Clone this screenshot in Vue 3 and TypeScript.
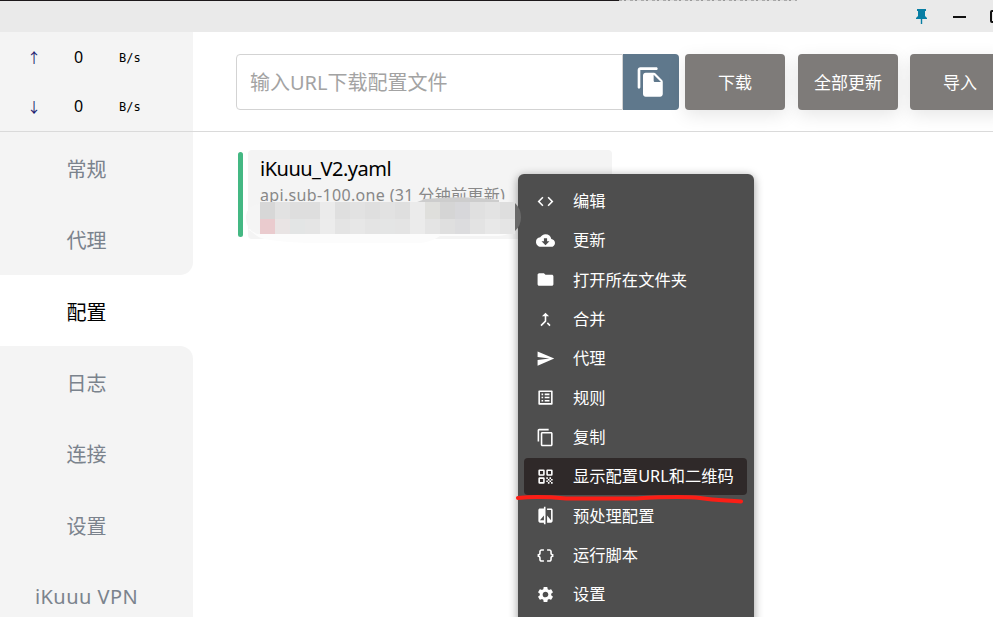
<script setup lang="ts">
interface MenuEntry {
  label: string
  icon: string
  hot?: boolean
}

const tabs: string[] = ['常规', '代理', '配置', '日志', '连接', '设置', 'iKuuu VPN']
const activeTab = '配置'
const activeIndex = tabs.indexOf(activeTab)

const rates = [
  { arrow: '↑', value: 0 },
  { arrow: '↓', value: 0 },
]

const entries: MenuEntry[] = [
  { label: '编辑', icon: 'M9.4 16.6 4.8 12l4.6-4.6L8 6l-6 6 6 6zm5.2 0 4.6-4.6-4.6-4.6L16 6l6 6-6 6z' },
  { label: '更新', icon: 'M19.35 10.04A7.49 7.49 0 0 0 12 4C9.11 4 6.6 5.64 5.35 8.04A5.994 5.994 0 0 0 0 14c0 3.31 2.69 6 6 6h13c2.76 0 5-2.24 5-5 0-2.64-2.05-4.78-4.65-4.96M17 13l-5 5-5-5h3V9h4v4z' },
  { label: '打开所在文件夹', icon: 'M10 4H4c-1.1 0-1.99.9-1.99 2L2 18c0 1.1.9 2 2 2h16c1.1 0 2-.9 2-2V8c0-1.1-.9-2-2-2h-8z' },
  { label: '合并', icon: 'M17 20.41 18.41 19 15 15.59 13.59 17zM7.5 8H11v5.59L5.59 19 7 20.41l6-6V8h3.5L12 3.5z' },
  { label: '代理', icon: 'M2.01 21 23 12 2.01 3 2 10l15 2-15 2z' },
  { label: '规则', icon: 'M19 5v14H5V5zm1.1-2H3.9c-.5 0-.9.4-.9.9v16.2c0 .4.4.9.9.9h16.2c.4 0 .9-.5.9-.9V3.9c0-.5-.5-.9-.9-.9M11 7h6v2h-6zm0 4h6v2h-6zm0 4h6v2h-6zM7 7h2v2H7zm0 4h2v2H7zm0 4h2v2H7z' },
  { label: '复制', icon: 'M16 1H4c-1.1 0-2 .9-2 2v14h2V3h12zm3 4H8c-1.1 0-2 .9-2 2v14c0 1.1.9 2 2 2h11c1.1 0 2-.9 2-2V7c0-1.1-.9-2-2-2m0 16H8V7h11z' },
  { label: '显示配置URL和二维码', hot: true, icon: 'M3 9.500Q3 11 4.500 11H9.500Q11 11 11 9.500V4.500Q11 3 9.500 3H4.500Q3 3 3 4.500zm2-4.500h4v4H5zM3 19.500Q3 21 4.500 21H9.500Q11 21 11 19.500V14.500Q11 13 9.500 13H4.500Q3 13 3 14.500zm2-4.500h4v4H5zM13 4.500V9.500Q13 11 14.500 11H19.500Q21 11 21 9.500V4.500Q21 3 19.500 3H14.500Q13 3 13 4.500zm6 4.500h-4V5h4zM19 19h2v2h-2zM13 13h2v2h-2zM15 15h2v2h-2zM13 17h2v2h-2zM15 19h2v2h-2zM17 17h2v2h-2zM17 13h2v2h-2zM19 15h2v2h-2z' },
  { label: '预处理配置', icon: 'M10 3H5c-1.1 0-2 .9-2 2v14c0 1.1.9 2 2 2h5v2h2V1h-2zm0 15H5l5-6zm9-15h-5v2h5v13l-5-6v9h5c1.1 0 2-.9 2-2V5c0-1.1-.9-2-2-2' },
  { label: '运行脚本', icon: 'M4 7v2c0 .55-.45 1-1 1H2v4h1c.55 0 1 .45 1 1v2c0 1.65 1.35 3 3 3h3v-2H7c-.55 0-1-.45-1-1v-2c0-1.3-.84-2.42-2-2.83v-.34C5.16 11.42 6 10.3 6 9V7c0-.55.45-1 1-1h3V4H7C5.35 4 4 5.35 4 7m17 3c-.55 0-1-.45-1-1V7c0-1.65-1.35-3-3-3h-3v2h3c.55 0 1 .45 1 1v2c0 1.3.84 2.42 2 2.83v.34c-1.16.41-2 1.52-2 2.83v2c0 .55-.45 1-1 1h-3v2h3c1.65 0 3-1.35 3-3v-2c0-.55.45-1 1-1h1v-4z' },
  { label: '设置', icon: 'M19.14 12.94c.04-.3.06-.61.06-.94s-.02-.64-.07-.94l2.03-1.58a.49.49 0 0 0 .12-.61l-1.92-3.32a.49.49 0 0 0-.59-.22l-2.39.96a7 7 0 0 0-1.62-.94l-.36-2.54a.48.48 0 0 0-.48-.41h-3.84c-.24 0-.43.17-.47.41l-.36 2.54c-.59.24-1.13.57-1.62.94l-2.39-.96a.48.48 0 0 0-.59.22L2.74 8.87c-.12.21-.08.47.12.61l2.03 1.58c-.05.3-.09.63-.09.94s.02.64.07.94l-2.03 1.58a.49.49 0 0 0-.12.61l1.92 3.32c.12.22.37.29.59.22l2.39-.96c.5.38 1.03.7 1.62.94l.36 2.54c.05.24.24.41.48.41h3.84c.24 0 .44-.17.47-.41l.36-2.54c.59-.24 1.13-.56 1.62-.94l2.39.96c.22.08.47 0 .59-.22l1.92-3.32a.48.48 0 0 0-.12-.61zM12 15.6A3.61 3.61 0 0 1 8.4 12c0-1.98 1.62-3.6 3.6-3.6s3.6 1.62 3.6 3.6-1.62 3.6-3.6 3.6' },
]

const mosaic: string[][] = [
  ['#d7d7d7', '#e2e2e2', '#dedede', '#dedede', '#ebebeb', '#dfdfdf', '#e2e2e2', '#dfdfdf', '#e2e2e2', '#dfdfdf', '#ebebeb', '#dfdfdc', '#d5d5d5', '#d7d7da', '#e0e0e0', '#e3e3e3', '#dedede'],
  ['#eacbce', '#e9e4e4', '#e3e5e5', '#e5e5e5', '#ececec', '#e4e4e4', '#e7e7e7', '#e4e4e4', '#e4e5e5', '#e4e4e4', '#ebebeb', '#e4e4e4', '#dfdfdf', '#dcdcde', '#e3e3e3', '#e8e8e8', '#e5e5e5'],
]
</script>

<template>
  <div class="window">
    <header class="titlebar">
      <div class="edge"><i class="edge-dark"></i><i class="edge-marks"></i></div>
      <div class="controls">
        <svg class="pin" viewBox="0 0 11 15"><path d="M1 0h9v2H9v5l2 2v1H6.2v5H4.8v-5H0V9l2-2V2H1z" /></svg>
        <i class="minimize"></i>
        <i class="maximize"></i>
      </div>
    </header>

    <div class="body">
      <aside class="sidebar">
        <div class="traffic">
          <div v-for="r in rates" :key="r.arrow" class="rate">
            <span class="arrow">{{ r.arrow }}</span>
            <span class="value">{{ r.value }}</span>
            <span class="unit">B/s</span>
          </div>
        </div>
        <nav class="tabs">
          <div
            v-for="(t, i) in tabs"
            :key="t"
            class="tab"
            :class="{ active: i === activeIndex, before: i === activeIndex - 1, after: i === activeIndex + 1 }"
          >{{ t }}</div>
        </nav>
      </aside>

      <main class="main">
        <div class="toolbar">
          <div class="url-field">输入URL下载配置文件</div>
          <div class="paste">
            <svg viewBox="0 0 24 24"><path d="M16 1H4c-1.1 0-2 .9-2 2v13c0 .55.45 1 1 1s1-.45 1-1V3h12c.55 0 1-.45 1-1s-.45-1-1-1m-.59 4.59 4.83 4.83c.37.37.58.88.58 1.41V21c0 1.1-.9 2-2 2H7.99C6.89 23 6 22.1 6 21l.01-14c0-1.1.89-2 1.99-2h6.17c.53 0 1.04.21 1.24.59M15 12h4.5L14 6.5V11c0 .55.45 1 1 1" /></svg>
          </div>
          <button class="btn">下载</button>
          <button class="btn">全部更新</button>
          <button class="btn last">导入</button>
        </div>

        <div class="profile">
          <i class="marker"></i>
          <div class="card">
            <div class="name">iKuuu_V2.yaml</div>
            <div class="source">api.sub-100.one (31 分钟前更新)</div>
          </div>
          <svg class="smudge" viewBox="0 0 280 50">
            <path class="fade" d="M3 34H270Q266 40 254 41H195Q186 47 175 48H70Q20 47 12 41Z" />
            <path class="haze" d="M18 8H163Q171 4 190 4H257Q270 6 270 22Q270 36 258 39H12Q0 34 1 21Q2 10 18 8Z" />
            <path class="shade" d="M270 8Q276 14 276 22Q276 31 270 36Z" />
            <path class="shade-top" d="M180 4Q220 0 254 5V9H167Z" />
            <g v-for="(row, y) in mosaic" :key="y">
              <rect v-for="(c, x) in row" :key="x" :x="15 + x * 15" :y="7 + y * 15 + (y ? 2 : 0)" width="15" :height="y ? 15 : 17" :fill="c" />
            </g>
          </svg>
        </div>
      </main>
    </div>

    <div class="menu">
      <div v-for="e in entries" :key="e.label" class="entry" :class="{ hot: e.hot }">
        <svg viewBox="0 0 24 24"><path :d="e.icon" /></svg>
        <span>{{ e.label }}</span>
      </div>
      <svg class="underline" viewBox="0 0 228 12"><path d="M2 4C20 2 34 3 50 4.5H120C145 3 165 2 184 4C202 7 211 6 225 7.500" /></svg>
    </div>
  </div>
</template>

<style>
body {
  overflow: hidden;
}
</style>

<style scoped>
.window {
  position: relative;
  width: 993px;
  height: 617px;
  overflow: hidden;
  display: flex;
  flex-direction: column;
  background: #fff;
  color: #000;
  font-family: "Noto Sans", "Noto Sans CJK SC", sans-serif;
}
.titlebar {
  height: 32px;
  flex: none;
  background: #eaeaea;
}
.edge {
  display: flex;
  height: 1px;
}
.edge-dark {
  width: 619px;
  background: #1d191b;
}
.edge-marks {
  width: 178px;
  background: repeating-linear-gradient(90deg, #aaa 0 3px, #ddd 3px 5px, #999 5px 7px, #ddd 7px 11px);
}
.controls {
  height: 31px;
  padding-left: 916px;
  display: flex;
  align-items: center;
}
.pin {
  width: 11px;
  height: 15px;
  flex: none;
  fill: #087ea4;
}
.minimize {
  flex: none;
  width: 13px;
  height: 2px;
  margin: 0 25px 0 26px;
  background: #111;
}
.maximize {
  flex: none;
  box-sizing: border-box;
  width: 13px;
  height: 13px;
  margin-left: -1px;
  border: 2px solid #111;
  border-radius: 2px;
}
.body {
  flex: 1;
  display: flex;
}
.sidebar {
  width: 193px;
  flex: none;
}
.traffic {
  box-sizing: border-box;
  height: 100px;
  background: #f4f4f4;
  border-bottom: 1px solid #dadada;
}
.rate {
  height: 49px;
  display: grid;
  grid-template-columns: 68px 21px 1fr;
  align-items: center;
}
.arrow {
  font: 14px/20px "Noto Sans CJK SC", sans-serif;
  width: 14px;
  margin-left: 27px;
  color: #1c1c70;
}
.value {
  font-size: 16px;
  text-align: center;
}
.unit {
  margin-left: 30px;
  padding-top: 3px;
  font: 12px "DejaVu Sans Mono", monospace;
}
.tab {
  box-sizing: border-box;
  height: 71.3px;
  padding: 2px 20px 0 0;
  display: flex;
  align-items: center;
  justify-content: center;
  background: #f4f4f4;
  color: #7b838d;
  font-size: 20px;
}
.tab:last-child {
  letter-spacing: 0.45px;
}
.tab.active {
  background: #fff;
  color: #000;
}
.tab.before {
  border-bottom-right-radius: 13px;
}
.tab.after {
  border-top-right-radius: 13px;
}
.main {
  flex: 1;
  min-width: 0;
}
.toolbar {
  box-sizing: border-box;
  height: 100px;
  padding: 22px 0 0 43px;
  display: flex;
  border-bottom: 1px solid #dadada;
}
.url-field {
  box-sizing: border-box;
  width: 387px;
  height: 56px;
  flex: none;
  padding-left: 13px;
  border: 1px solid #d3d3d3;
  border-radius: 4px 0 0 4px;
  color: #a3a3a3;
  font-size: 20px;
  line-height: 55px;
}
.paste {
  width: 56px;
  height: 56px;
  flex: none;
  display: flex;
  align-items: center;
  justify-content: center;
  background: #5f788c;
  border-radius: 0 4px 4px 0;
}
.paste svg {
  width: 32px;
  height: 32px;
  fill: #fff;
}
.btn {
  flex: none;
  width: 100px;
  height: 56px;
  margin: 0 0 0 13px;
  padding: 1px 0 0;
  border: 0;
  border-radius: 4px;
  background: #7e7b79;
  box-shadow: 0 5px 18px rgba(0, 0, 0, 0.1);
  color: #fff;
  font: 400 17px/56px "Noto Sans", "Noto Sans CJK SC", sans-serif;
}
.paste + .btn {
  margin-left: 6px;
}
.btn.last {
  margin-left: 12px;
}
.profile {
  position: relative;
  display: flex;
  width: 374px;
  margin: 18px 0 0 45px;
}
.marker {
  width: 5px;
  height: 85px;
  margin: 2px 5px 0 0;
  background: #44b883;
  border-radius: 3px;
}
.card {
  box-sizing: border-box;
  flex: 1;
  height: 89px;
  padding: 5px 12px 0;
  background: #f4f4f4;
  border-radius: 4px;
  white-space: nowrap;
}
.name {
  font-size: 20px;
  line-height: 28px;
  letter-spacing: -0.5px;
}
.source {
  color: #888;
  font-size: 16px;
  line-height: 24px;
  letter-spacing: 0.34px;
}
.smudge {
  position: absolute;
  z-index: 1;
  left: 7px;
  top: 45px;
  width: 280px;
  height: 50px;
}
.fade {
  fill: #fcfcfc;
}
.haze {
  fill: #f5f5f5;
}
.shade {
  fill: #6a6a6a;
}
.shade-top {
  fill: #cdcdcd;
}
.menu {
  position: absolute;
  left: 518px;
  top: 174px;
  box-sizing: border-box;
  width: 236px;
  height: 460px;
  padding: 8.5px 7px 0 6px;
  border-radius: 6px;
  background: #4e4e4e;
  box-shadow: 0 2px 10px rgba(0, 0, 0, 0.4);
}
.entry {
  display: flex;
  align-items: center;
  height: 37px;
  margin-bottom: 2.35px;
  padding-left: 12px;
  border-radius: 4px;
  color: #fff;
  font-size: 16.3px;
  white-space: nowrap;
}
.entry span {
  padding-bottom: 2px;
}
.entry.hot {
  background: #2f2929;
}
.entry svg {
  width: 19px;
  height: 19px;
  margin-right: 18px;
  flex: none;
  fill: #fff;
}
.underline {
  position: absolute;
  left: -2px;
  top: 320px;
  width: 228px;
  height: 12px;
}
.underline path {
  fill: none;
  stroke: #fb1e16;
  stroke-width: 4;
  stroke-linecap: round;
}
</style>
